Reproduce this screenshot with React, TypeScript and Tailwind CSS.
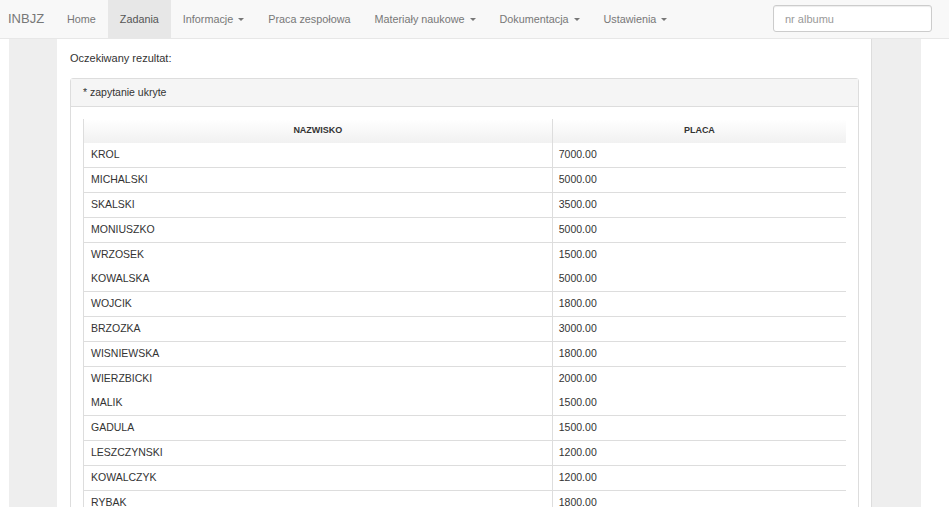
const navItems = [
  { label: 'Home' },
  { label: 'Zadania', active: true },
  { label: 'Informacje', caret: true },
  { label: 'Praca zespołowa' },
  { label: 'Materiały naukowe', caret: true },
  { label: 'Dokumentacja', caret: true },
  { label: 'Ustawienia', caret: true },
];

const rows = [
  { name: 'KROL', pay: '7000.00', noBorder: true },
  { name: 'MICHALSKI', pay: '5000.00' },
  { name: 'SKALSKI', pay: '3500.00' },
  { name: 'MONIUSZKO', pay: '5000.00' },
  { name: 'WRZOSEK', pay: '1500.00' },
  { name: 'KOWALSKA', pay: '5000.00', noBorder: true },
  { name: 'WOJCIK', pay: '1800.00' },
  { name: 'BRZOZKA', pay: '3000.00' },
  { name: 'WISNIEWSKA', pay: '1800.00' },
  { name: 'WIERZBICKI', pay: '2000.00' },
  { name: 'MALIK', pay: '1500.00', noBorder: true },
  { name: 'GADULA', pay: '1500.00' },
  { name: 'LESZCZYNSKI', pay: '1200.00' },
  { name: 'KOWALCZYK', pay: '1200.00' },
  { name: 'RYBAK', pay: '1800.00' },
];

function Caret() {
  return (
    <span className="inline-block w-0 h-0 ml-[5px] align-middle border-x-[3.5px] border-x-transparent border-t-[3.5px] border-t-[#777]" />
  );
}

function Navbar() {
  return (
    <nav className="h-[39px] bg-[#f8f8f8] border-b border-[#e7e7e7] flex items-stretch">
      <div className="w-[55px] pl-[8px] flex items-center text-[13px] text-[#777]">INBJZ</div>
      <ul className="flex items-stretch">
        {navItems.map((item) => (
          <li
            key={item.label}
            className={
              item.active
                ? 'px-[12px] flex items-center bg-[#e7e7e7] text-[#555] text-[10.8px]'
                : 'px-[12px] flex items-center text-[#777] text-[10.8px]'
            }
          >
            {item.label}
            {item.caret && <Caret />}
          </li>
        ))}
      </ul>
      <div className="ml-auto pr-[17px] flex items-center">
        <input
          placeholder="nr albumu"
          className="w-[159px] h-[27px] mt-[-1px] px-[11px] text-[11px] bg-white border border-[#ccc] rounded-[3px] text-[#555] placeholder:text-[#999] outline-none shadow-[inset_0_1px_1px_rgba(0,0,0,0.075)]"
        />
      </div>
    </nav>
  );
}

function ResultTable() {
  return (
    <div className="border-l border-[#ddd] text-[10.5px] text-[#333]">
      <div className="flex h-[24px] bg-gradient-to-b from-white to-[#f1f1f1] font-bold text-[9px]">
        <div className="w-[469px] flex items-center justify-center">NAZWISKO</div>
        <div className="w-[295px] border-l border-[#ddd] flex items-center justify-center">PLACA</div>
      </div>
      {rows.map((r) => (
        <div
          key={r.name}
          className={r.noBorder ? 'flex h-[24px]' : 'flex h-[25px] border-t border-[#ddd]'}
        >
          <div className="w-[469px] pl-[7px] flex items-center">{r.name}</div>
          <div className="w-[295px] pl-[6px] border-l border-[#ddd] flex items-center">{r.pay}</div>
        </div>
      ))}
    </div>
  );
}

export default function App() {
  return (
    <div className="min-h-screen bg-white font-['Liberation_Sans',Arial,sans-serif]">
      <Navbar />
      <div className="ml-[9px] w-[912px] bg-[#eee]">
        <div className="ml-[48px] w-[815px] bg-white border-r border-[#ddd] pl-[13px] pr-[12px] pt-[11px] pb-[20px]">
          <p className="text-[11px] text-[#333] leading-[16px]">Oczekiwany rezultat:</p>
          <div className="mt-[12px] border border-[#ddd] rounded-[3px]">
            <div className="h-[28px] px-[12px] flex items-center bg-[#f5f5f5] border-b border-[#ddd] text-[10.5px] text-[#333]">
              * zapytanie ukryte
            </div>
            <div className="pt-[12px] px-[12px] pb-[12px]">
              <ResultTable />
            </div>
          </div>
        </div>
      </div>
    </div>
  );
}
